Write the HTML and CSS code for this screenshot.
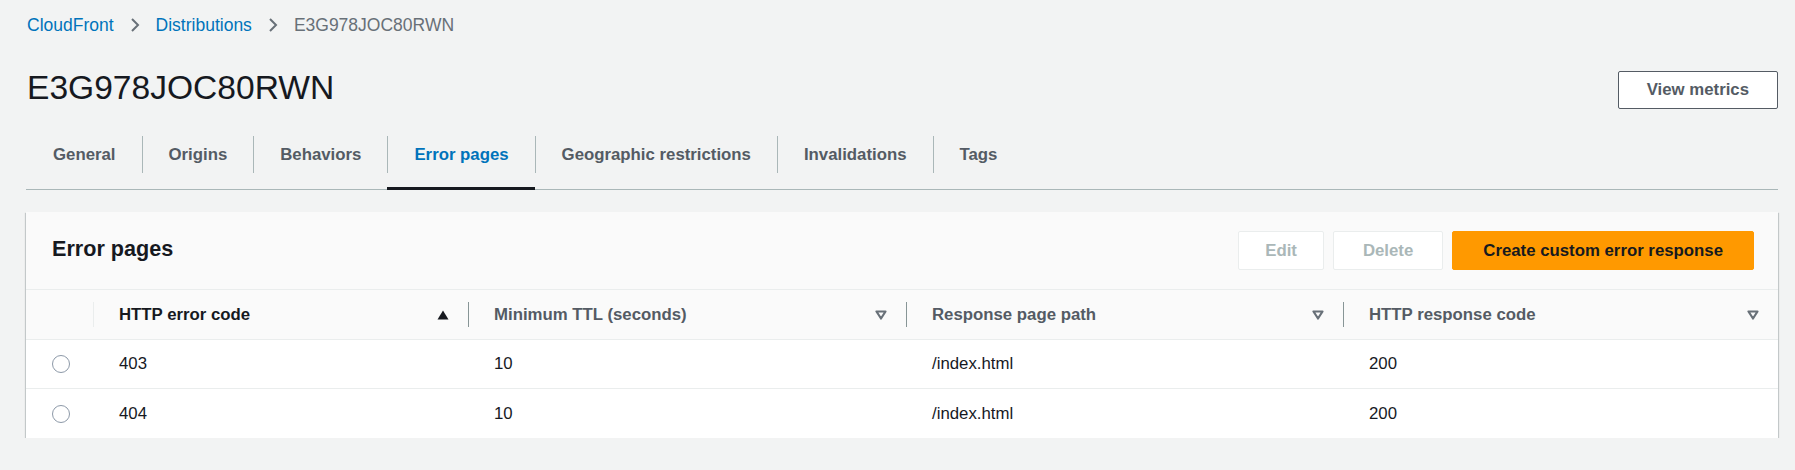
FILE: index.html
```html
<!DOCTYPE html>
<html lang="en">

<head>
  <meta charset="UTF-8">
  <meta name="viewport" content="width=device-width, initial-scale=1.0">
  <title>E3G978JOC80RWN | CloudFront</title>
  <link rel="stylesheet" href="styles.css">
</head>

<body>
  <div class="page">
    <!-- breadcrumb -->
    <nav class="breadcrumbs">
      <a href="#">CloudFront</a>
      <svg class="crumb-sep" width="12" height="16" viewBox="0 0 12 16"><path d="M3 2 L9 8 L3 14" fill="none" stroke="#687078" stroke-width="2"/></svg>
      <a href="#">Distributions</a>
      <svg class="crumb-sep" width="12" height="16" viewBox="0 0 12 16"><path d="M3 2 L9 8 L3 14" fill="none" stroke="#687078" stroke-width="2"/></svg>
      <span class="crumb-current">E3G978JOC80RWN</span>
    </nav>

    <!-- page header -->
    <div class="page-header">
      <h1>E3G978JOC80RWN</h1>
      <button class="btn btn-normal">View metrics</button>
    </div>

    <!-- tabs -->
    <div class="tabs">
      <a class="tab" href="#"><span>General</span></a>
      <a class="tab" href="#"><span>Origins</span></a>
      <a class="tab" href="#"><span>Behaviors</span></a>
      <a class="tab active" href="#"><span>Error pages</span></a>
      <a class="tab" href="#"><span>Geographic restrictions</span></a>
      <a class="tab" href="#"><span>Invalidations</span></a>
      <a class="tab" href="#"><span>Tags</span></a>
    </div>

    <!-- error pages table -->
    <div class="panel">
      <div class="panel-header">
        <h2>Error pages</h2>
        <div class="actions">
          <button class="btn btn-disabled">Edit</button>
          <button class="btn btn-disabled wide">Delete</button>
          <button class="btn btn-primary">Create custom error response</button>
        </div>
      </div>

      <div class="grid thead">
        <div class="th"></div>
        <div class="th"><div class="th-cell first sorted">HTTP error code
            <svg width="12" height="10" viewBox="0 0 12 10"><polygon points="0.5,9.5 11.5,9.5 6,0.5" fill="#16191f"/></svg></div></div>
        <div class="th"><div class="th-cell">Minimum TTL (seconds)
            <svg width="12" height="10" viewBox="0 0 12 10"><polygon points="1.5,1.5 10.5,1.5 6,8.5" fill="none" stroke="#687078" stroke-width="2.2" stroke-linejoin="round"/></svg></div></div>
        <div class="th"><div class="th-cell">Response page path
            <svg width="12" height="10" viewBox="0 0 12 10"><polygon points="1.5,1.5 10.5,1.5 6,8.5" fill="none" stroke="#687078" stroke-width="2.2" stroke-linejoin="round"/></svg></div></div>
        <div class="th"><div class="th-cell">HTTP response code
            <svg width="12" height="10" viewBox="0 0 12 10"><polygon points="1.5,1.5 10.5,1.5 6,8.5" fill="none" stroke="#687078" stroke-width="2.2" stroke-linejoin="round"/></svg></div></div>
      </div>

      <div class="grid row">
        <div class="td"><span class="radio"></span></div>
        <div class="td">403</div>
        <div class="td">10</div>
        <div class="td">/index.html</div>
        <div class="td">200</div>
      </div>
      <div class="grid row">
        <div class="td"><span class="radio"></span></div>
        <div class="td">404</div>
        <div class="td">10</div>
        <div class="td">/index.html</div>
        <div class="td">200</div>
      </div>
    </div>
  </div>
</body>

</html>
```

FILE: styles.css
```css
/* 整体布局 */
body {
  margin: 0;
  background-color: #f2f3f3;
  font-family: "Liberation Sans", Arial, sans-serif;
  font-size: 16.8px;
  color: #16191f;
}

.page {
  padding: 0 17px 0 26px;
}

/* 面包屑 */
.breadcrumbs {
  display: flex;
  align-items: center;
  height: 50px;
  padding-left: 1px;
  font-size: 17.5px;
}

.breadcrumbs a {
  color: #0073bb;
  text-decoration: none;
}

.crumb-sep {
  margin: 0 15px;
}

.crumb-current {
  color: #687078;
}

/* 页面标题 */
.page-header {
  display: flex;
  align-items: center;
  justify-content: space-between;
  height: 80px;
}

.page-header h1 {
  margin: 0 0 4px 1px;
  font-size: 33.6px;
  font-weight: normal;
  line-height: 40px;
}

/* 按钮 */
.btn {
  font-family: inherit;
  font-size: 16.8px;
  font-weight: bold;
  height: 39px;
  padding: 0 26px;
  border-radius: 2px;
  cursor: pointer;
}

.btn-normal {
  height: 38px;
  padding: 0 28px;
  background-color: #fff;
  border: 1px solid #545b64;
  color: #545b64;
}

.btn-disabled {
  background-color: #fff;
  border: 1px solid #eaeded;
  color: #aab7b8;
  cursor: default;
}

.btn-disabled.wide {
  padding: 0 29px;
}

.btn-primary {
  padding: 0 30px;
  background-color: #ff9900;
  border: 1px solid #ff9900;
  color: #16191f;
}

/* 标签页 */
.tabs {
  display: flex;
  border-bottom: 1px solid #aab7b8;
}

.tab {
  padding: 6px 0 14px;
  border-bottom: 3px solid transparent;
  margin-bottom: -1px;
  color: #545b64;
  font-weight: bold;
  text-decoration: none;
}

.tab span {
  display: block;
  line-height: 37px;
  padding: 0 26px;
  border-left: 1px solid #aab7b8;
}

.tab:first-child span {
  border-left: none;
  padding-left: 27px;
}

.tab.active {
  color: #0073bb;
  border-bottom-color: #16191f;
}

/* 面板 */
.panel {
  margin-top: 22px;
  background-color: #fff;
  box-shadow: 0 1px 1px 0 rgba(0, 28, 36, 0.3), 1px 1px 1px 0 rgba(0, 28, 36, 0.15), -1px 1px 1px 0 rgba(0, 28, 36, 0.15);
}

.panel-header {
  display: flex;
  align-items: center;
  justify-content: space-between;
  height: 77px;
  padding: 0 24px 0 26px;
  background-color: #fafafa;
  border-bottom: 1px solid #eaeded;
}

.panel-header h2 {
  margin: 0 0 4px;
  font-size: 21.6px;
  font-weight: bold;
}

.actions {
  display: flex;
  gap: 9px;
}

/* 表格 */
.grid {
  display: grid;
  grid-template-columns: 67px 375px 438px 437px 1fr;
}

.thead {
  background-color: #fafafa;
  border-bottom: 1px solid #eaeded;
}

.th {
  padding: 12px 19px 12px 0;
}

.th:first-child {
  padding-right: 0;
}

.th-cell {
  display: flex;
  align-items: center;
  justify-content: space-between;
  height: 25px;
  padding-left: 25px;
  border-left: 1px solid #879596;
  color: #545b64;
  font-weight: bold;
}

.th-cell.first {
  border-left-color: #eaeded;
}

.th-cell.sorted {
  color: #16191f;
}

.row {
  height: 48px;
  border-bottom: 1px solid #eaeded;
}

.row:last-child {
  height: 49px;
  border-bottom: none;
}

.td {
  display: flex;
  align-items: center;
  padding-left: 26px;
}

.radio {
  width: 16px;
  height: 16px;
  border: 1px solid #8d99a8;
  border-radius: 50%;
}
```
